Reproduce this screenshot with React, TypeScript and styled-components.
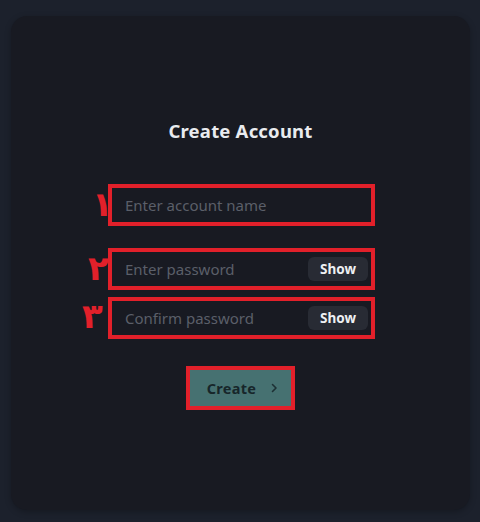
import React, {useState} from 'react';
import styled, {createGlobalStyle} from 'styled-components';

const GlobalStyle = createGlobalStyle`
  html, body {
    margin: 0;
    padding: 0;
    background-color: #1c212c;
  }
  body {
    font-family: 'Noto Sans', 'DejaVu Sans', sans-serif;
  }
`;

const Page = styled.div`
  box-sizing: border-box;
  width: 480px;
  height: 522px;
  padding: 16px 10px 12px 11px;
`;

const Card = styled.div`
  box-sizing: border-box;
  height: 100%;
  display: flex;
  flex-direction: column;
  align-items: center;
  padding-top: 103px;
  background-color: #181a22;
  border-radius: 16px;
  box-shadow: 0 2px 6px rgba(0, 0, 0, .25);
`;

const Title = styled.h1`
  margin: 0 0 41px;
  font-size: 18.5px;
  line-height: 24px;
  font-weight: 700;
  color: #e9ebef;
  letter-spacing: 0.2px;
`;

const Fields = styled.div`
  display: flex;
  flex-direction: column;
  width: 267px;
  margin-left: 2px;
`;

type MarkPropsType = {
  $gap?: string
}

// red annotation frame drawn over the screenshot
const Mark = styled.div<MarkPropsType>`
  position: relative;
  box-sizing: border-box;
  margin-top: ${props => props.$gap || '0'};
  border: 4px solid #e2202a;
`;

type NumberPropsType = {
  $left: string
  $top: string
}

const Number = styled.span<NumberPropsType>`
  position: absolute;
  left: ${props => props.$left};
  top: ${props => props.$top};
  font-family: 'DejaVu Sans', sans-serif;
  font-size: 34px;
  line-height: 34px;
  font-weight: 700;
  color: #e2202a;
`;

const InputRow = styled.div`
  display: flex;
  align-items: center;
  height: 34px;
  padding: 0 3px 0 13px;
`;

const Input = styled.input`
  flex: 1;
  min-width: 0;
  height: 100%;
  padding: 0;
  border: none;
  outline: none;
  background: transparent;
  font-family: inherit;
  font-size: 15px;
  color: #d5d8de;

  &::placeholder {
    color: #5b5f69;
  }
`;

const ShowButton = styled.button`
  width: 60px;
  height: 24px;
  border: none;
  border-radius: 6px;
  background-color: #282b34;
  color: #eef0f3;
  font-family: inherit;
  font-size: 13.5px;
  font-weight: 700;
  cursor: pointer;
`;

const ButtonMark = styled(Mark)`
  margin-top: 27px;
`;

const CreateButton = styled.button`
  display: flex;
  align-items: center;
  justify-content: center;
  gap: 14px;
  width: 101px;
  height: 36px;
  padding: 0 0 0 4px;
  border: none;
  background-color: #467171;
  color: #17262a;
  font-family: inherit;
  font-size: 14.5px;
  font-weight: 700;
  letter-spacing: 0.3px;
  cursor: pointer;
`;

const Chevron = () =>
  <svg width="8" height="10" viewBox="0 0 8 10" fill="none">
    <path d="M2.5 1.5 L6 5 L2.5 8.5" stroke="#1d3034" strokeWidth="1.6" strokeLinecap="round" strokeLinejoin="round"/>
  </svg>;

type PasswordFieldPropsType = {
  placeholder: string
}

const PasswordField = ({placeholder}: PasswordFieldPropsType) => {
  const [visible, setVisible] = useState(false);
  return <InputRow>
    <Input type={visible ? 'text' : 'password'} placeholder={placeholder}/>
    <ShowButton onClick={() => setVisible(v => !v)}>{visible ? 'Hide' : 'Show'}</ShowButton>
  </InputRow>;
};

export default function App() {
  return <>
    <GlobalStyle/>
    <Page>
      <Card>
        <Title>Create Account</Title>
        <Fields>
          <Mark>
            <Number $left="-20px" $top="-1px">١</Number>
            <InputRow>
              <Input type="text" placeholder="Enter account name"/>
            </InputRow>
          </Mark>
          <Mark $gap="22px">
            <Number $left="-24px" $top="-1px">٢</Number>
            <PasswordField placeholder="Enter password"/>
          </Mark>
          <Mark $gap="7px">
            <Number $left="-30px" $top="-2px">٣</Number>
            <PasswordField placeholder="Confirm password"/>
          </Mark>
        </Fields>
        <ButtonMark>
          <CreateButton>Create<Chevron/></CreateButton>
        </ButtonMark>
      </Card>
    </Page>
  </>;
}
